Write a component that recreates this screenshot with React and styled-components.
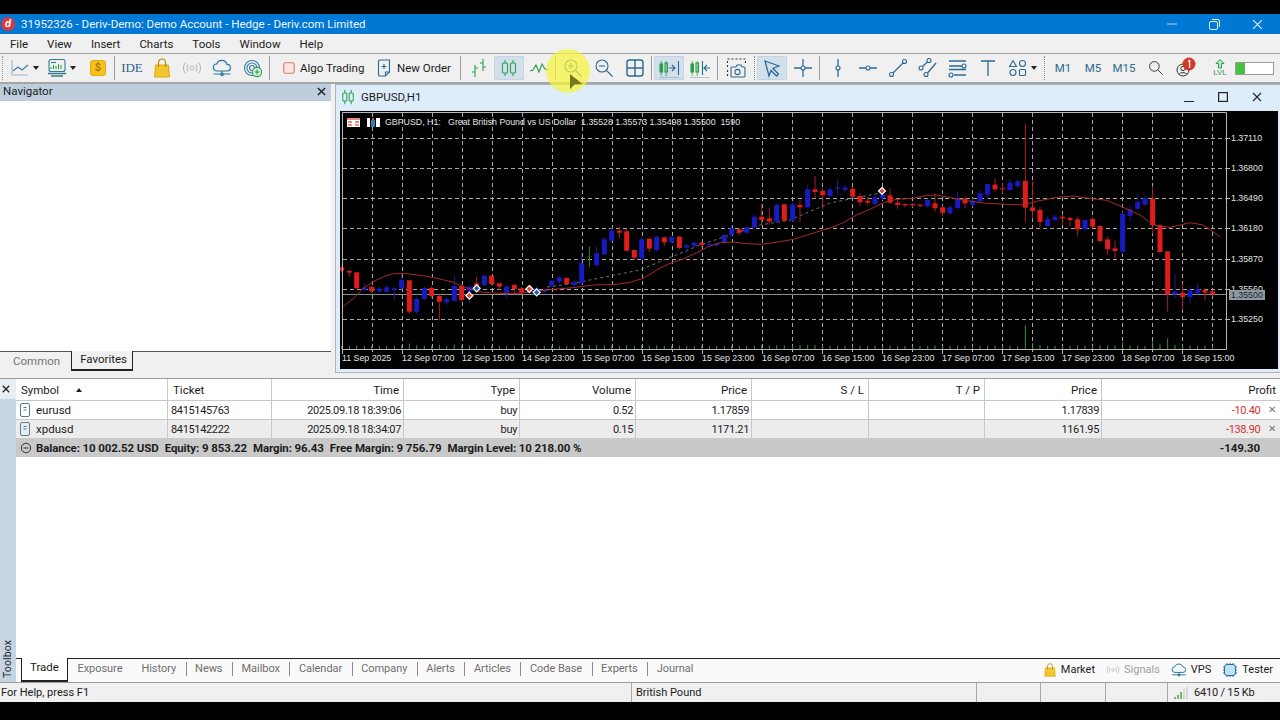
import React from "react";
import styled, { createGlobalStyle } from "styled-components";

const GlobalStyle = createGlobalStyle`
  html, body {
    margin: 0;
    padding: 0;
    background: #000;
  }
  * { box-sizing: border-box; }
`;

const Page = styled.div`
  width: 1280px;
  height: 720px;
  overflow: hidden;
  position: relative;
  display: flex;
  flex-direction: column;
  background: #000;
  padding: 14px 0 18px;
  font-family: Roboto, "Noto Sans", sans-serif;
  font-size: 11.5px;
  color: #1c1c1c;
  white-space: nowrap;
`;

const TitleBar = styled.div`
  height: 20px;
  display: flex;
  align-items: center;
  background: #0078d4;
  color: #eef6fc;
  padding: 0 1px;
`;

const TitleText = styled.span`
  margin-left: 6px;
  flex: 1;
`;

const AppLogo = styled.span`
  width: 14px;
  height: 14px;
  border-radius: 50%;
  background: #d9383f;
  color: #fff;
  font-weight: 700;
  font-style: italic;
  font-size: 11px;
  line-height: 14px;
  text-align: center;
`;

const WinButton = styled.span`
  width: 43px;
  display: flex;
  justify-content: center;
  align-items: center;
`;

const MenuBar = styled.div`
  height: 19px;
  display: flex;
  align-items: center;
  background: #f0f0f0;
  padding-left: 10px;
  gap: 19px;
`;

const Toolbar = styled.div`
  height: 31px;
  display: flex;
  align-items: center;
  background: #f0f0f0;
  border-top: 1px solid #a6a6a6;
  border-bottom: 2px solid #a6a6a6;
  padding-left: 2px;
`;

const Grip = styled.span`
  width: 1px;
  height: 24px;
  margin-right: 3px;
  border-left: 1px dotted #9a9a9a;
`;

const ToolBtn = styled.div`
  width: ${(p) => p.$w || 30}px;
  height: 24px;
  margin-left: ${(p) => p.$ml || 0}px;
  padding-left: ${(p) => p.$pl || 0}px;
  flex: none;
  display: flex;
  align-items: center;
  justify-content: ${(p) => (p.$pl ? "flex-start" : "center")};
  gap: ${(p) => p.$gap || 0}px;
  color: #2d6a92;
  background: ${(p) => (p.$active ? "#d2e0ec" : "transparent")};
  border: 1px solid ${(p) => (p.$active ? "#c4d4e2" : "transparent")};
`;

const ToolLabel = styled.span`
  color: #1c1c1c;
`;

const TimeLabel = styled.span`
  color: #2d6a92;
  font-size: 11.5px;
`;

const IdeLabel = styled.span`
  color: #2d5f88;
  font-family: "Liberation Serif", serif;
  font-size: 13px;
`;

const DollarBox = styled.span`
  width: 16px;
  height: 16px;
  border-radius: 3px;
  background: #f5c21b;
  border: 1px solid #e0aa10;
  color: #a9770a;
  font-weight: 700;
  font-size: 11px;
  line-height: 14px;
  text-align: center;
`;

const Caret = styled.span`
  width: 0;
  height: 0;
  border-left: 3.5px solid transparent;
  border-right: 3.5px solid transparent;
  border-top: 4px solid #222;
`;

const Sep = styled.span`
  width: 1px;
  height: 24px;
  flex: none;
  margin: 0 ${(p) => p.$mr || 2}px 0 ${(p) => p.$ml || 1}px;
  background: ${(p) => (p.$dotted ? "none" : "#9a9a9a")};
  border-left: ${(p) => (p.$dotted ? "1px dotted #8a8a8a" : "none")};
`;

const LevelBar = styled.span`
  width: 39px;
  height: 13px;
  flex: none;
  background: linear-gradient(90deg, #45c23e 0 25%, #fff 25%);
  border: 1px solid #9a9a9a;
`;

const LevelWrap = styled.span`
  display: flex;
  flex-direction: column;
  align-items: center;
  color: #2e9e4f;
`;

const LevelText = styled.span`
  font-size: 8px;
  line-height: 8px;
  font-family: "Liberation Sans", sans-serif;
`;

const Highlight = styled.div`
  position: absolute;
  left: 546px;
  top: 49px;
  width: 44px;
  height: 44px;
  border-radius: 50%;
  background: rgba(246, 244, 60, 0.72);
`;

const Pointer = styled.svg`
  position: absolute;
  left: 569px;
  top: 73px;
`;

const Workspace = styled.div`
  height: 294px;
  display: flex;
  background: #f0f0f0;
`;

const LeftPanel = styled.div`
  width: 331px;
  flex: none;
  display: flex;
  flex-direction: column;
`;

const PanelHead = styled.div`
  height: 17px;
  display: flex;
  align-items: center;
  justify-content: space-between;
  background: #bfcedc;
  padding: 0 5px 3px 3px;
`;

const PanelBody = styled.div`
  flex: none;
  height: 250px;
  background: #fff;
`;

const PanelTabs = styled.div`
  height: 20px;
  display: flex;
  align-items: stretch;
  border-top: 1px solid #555;
`;

const PanelTab = styled.div`
  display: flex;
  align-items: center;
  padding: 0 ${(p) => (p.$active ? 5 : 11)}px 2px ${(p) => (p.$active ? 8 : 13)}px;
  color: ${(p) => (p.$active ? "#1c1c1c" : "#777")};
  margin-top: ${(p) => (p.$active ? -1 : 0)}px;
  background: #f0f0f0;
  border: ${(p) => (p.$active ? "1px solid #222" : "none")};
  border-top: none;
  border-bottom-width: ${(p) => (p.$active ? 2 : 0)}px;
`;

const ChartWindow = styled.div`
  margin-left: 4px;
  flex: 1;
  height: 289px;
  display: flex;
  flex-direction: column;
  background: #deedfa;
  border: 1px solid #a9b4bd;
  border-right: none;
  padding: 0 2px 2px 4px;
`;

const ChartTitle = styled.div`
  height: 26px;
  flex: none;
  display: flex;
  align-items: center;
  padding-bottom: 3px;
`;

const ChartName = styled.span`
  flex: 1;
  margin-left: 5px;
`;

const ChartBtn = styled.span`
  width: 34px;
  display: flex;
  justify-content: center;
  margin-right: ${(p) => p.$mr || 0}px;
`;

const ChartCanvas = styled.svg`
  display: block;
  background: #000;
  flex: none;
`;

const Toolbox = styled.div`
  height: 305px;
  display: flex;
  background: #fff;
  border-top: 1px solid #9a9a9a;
  border-bottom: 1px solid #9a9a9a;
`;

const Strip = styled.div`
  width: 16px;
  flex: none;
  display: flex;
  flex-direction: column;
  justify-content: space-between;
  align-items: center;
  background: #c5d5e3;
`;

const StripClose = styled.div`
  height: 20px;
  width: 100%;
  display: flex;
  align-items: center;
  justify-content: center;
  padding-right: 4px;
  background: #e9eef3;
`;

const StripLabel = styled.span`
  writing-mode: vertical-rl;
  transform: rotate(180deg);
  font-size: 10.5px;
  letter-spacing: 0.1px;
  padding-top: 4px;
  padding-left: 2px;
`;

const ToolboxMain = styled.div`
  flex: 1;
  display: flex;
  flex-direction: column;
  min-width: 0;
`;

const Table = styled.div`
  flex: 1;
`;

const columns = "152px 104px 132px 116px 116px 116px 117px 116px 117px 1fr";

const HeadRow = styled.div`
  height: 21px;
  display: grid;
  grid-template-columns: ${columns};
  align-items: stretch;
`;

const HeadCell = styled.div`
  display: flex;
  align-items: center;
  justify-content: ${(p) => (p.$right ? "flex-end" : "flex-start")};
  padding: 0 4px 0 5px;
  border-right: 1px solid #c8c8c8;
  &:last-child { border-right: none; }
`;

const SortMark = styled.span`
  margin-left: 17px;
  width: 0;
  height: 0;
  border-left: 3.5px solid transparent;
  border-right: 3.5px solid transparent;
  border-bottom: 4px solid #222;
`;

const Row = styled.div`
  height: 19px;
  display: grid;
  grid-template-columns: ${columns};
  background: ${(p) => (p.$alt ? "#ececec" : "#fff")};
  border-top: 1px solid #c8c8c8;
`;

const Cell = styled.div`
  display: flex;
  align-items: center;
  gap: ${(p) => (p.$icon ? 6 : 8)}px;
  justify-content: ${(p) => (p.$right ? "flex-end" : "flex-start")};
  padding: 0 ${(p) => (p.$loss ? 4 : 2)}px 0 ${(p) => (p.$icon ? 4 : 3)}px;
  font-size: ${(p) => (p.$icon ? 11.5 : 11)}px;
  letter-spacing: ${(p) => (p.$icon ? 0 : -0.35)}px;
  color: ${(p) => (p.$loss ? "#d2342c" : "inherit")};
  border-right: 1px solid #c8c8c8;
  &:last-child { border-right: none; }
`;

const CloseMark = styled.span`
  color: #777;
  font-size: 10px;
  line-height: 1;
`;

const SummaryRow = styled.div`
  height: 19px;
  display: flex;
  align-items: center;
  background: #c9c9c9;
  padding: 0 20px 0 4px;
  font-weight: 700;
  letter-spacing: -0.1px;
  gap: 4px;
`;

const SummaryItems = styled.div`
  flex: 1;
  display: flex;
  gap: 6px;
`;

const TabBar = styled.div`
  height: 24px;
  flex: none;
  display: flex;
  align-items: stretch;
  border-top: 1px solid #222;
  background: #fafafa;
  padding-left: 5px;
`;

const Tab = styled.div`
  display: flex;
  align-items: center;
  padding: 0 ${(p) => (p.$active ? "8px" : "9.5px")} 5px;
  font-size: ${(p) => (p.$active ? 11.5 : 11)}px;
  letter-spacing: ${(p) => (p.$active ? 0 : -0.05)}px;
  color: ${(p) => (p.$active ? "#1c1c1c" : "#6e6e6e")};
  background: ${(p) => (p.$active ? "#fff" : "transparent")};
  margin-top: ${(p) => (p.$active ? "-1px" : "0")};
  border: ${(p) => (p.$active ? "1px solid #222" : "none")};
  border-top: ${(p) => (p.$active ? "none" : "0")};
  border-bottom-width: ${(p) => (p.$active ? "2px" : "0")};
  position: relative;
  & + & + &::before {
    content: "";
    position: absolute;
    left: 0;
    top: 3px;
    height: 14px;
    width: 1px;
    background: #8a8a8a;
  }
`;

const TabSpacer = styled.div`
  flex: 1;
`;

const SideTab = styled.div`
  display: flex;
  align-items: center;
  gap: 4px;
  padding-bottom: 2px;
  font-size: 11px;
  margin-right: ${(p) => p.$mr || 11}px;
  color: ${(p) => (p.$off ? "#a0a0a0" : "#1c1c1c")};
`;

const StatusBar = styled.div`
  height: 19px;
  display: flex;
  align-items: stretch;
  background: #f0f0f0;
  font-size: 11px;
`;

const StatusCell = styled.div`
  width: ${(p) => (p.$w ? `${p.$w}px` : "auto")};
  flex: ${(p) => (p.$w ? "none" : 1)};
  display: flex;
  align-items: center;
  gap: 6px;
  padding-left: ${(p) => p.$pl || 0}px;
  letter-spacing: ${(p) => (p.$end ? -0.2 : 0)}px;
  border-right: ${(p) => (p.$end ? "none" : "1px solid #a8a8a8")};
`;

const Svg = ({ w = 20, h = 20, children, ...rest }) => (
  <svg width={w} height={h} viewBox={`0 0 ${w} ${h}`} fill="none" stroke="currentColor" strokeWidth="1.1" {...rest}>
    {children}
  </svg>
);

const GREEN = "#2e9e4f";

const LineChartIcon = () => (
  <Svg>
    <path d="M2 2v15h16" stroke="#9fb4c4" />
    <path d="M3 13l5-4 4 3 6-5" stroke="#3b7aa5" />
  </Svg>
);

const PackIcon = () => (
  <Svg>
    <rect x="2" y="1.500" width="16" height="12" rx="2" stroke="#2f7d8c" />
    <path d="M4 11V9m2.500 2V7m2.500 4V8m2.500 3V6m2.500 5V7" stroke={GREEN} />
    <path d="M4 4.500h5" stroke="#2f7d8c" />
    <path d="M1 15.500h18M4 18h12" stroke="#2f7d8c" strokeWidth="1.400" />
  </Svg>
);

const BagIcon = ({ size = 20 }) => (
  <svg width={size} height={size} viewBox="0 0 20 20">
    <path d="M3.500 7h13l1 12h-15z" fill="#f3c62d" stroke="#dba915" />
    <path d="M6.500 9V4.500a3.500 3.500 0 017 0V9" fill="none" stroke="#b98a10" strokeWidth="1.200" />
  </svg>
);

const SignalIcon = ({ w = 20 }) => (
  <svg width={w} height={w * 0.7} viewBox="0 0 20 14" fill="none" stroke="#b5b5b5" strokeWidth="1">
    <circle cx="10" cy="7" r="2" />
    <path d="M6 3.500a6 6 0 000 7M14 3.500a6 6 0 010 7M3.500 1.500a9 9 0 000 11M16.500 1.500a9 9 0 010 11" />
  </svg>
);

const CloudIcon = ({ size = 20 }) => (
  <svg width={size} height={size} viewBox="0 0 20 20" fill="none" stroke="#25739f" strokeWidth="1.200">
    <path d="M5 13a3.500 3.500 0 01-.3-7A5.400 5.400 0 0115 6.400 3.300 3.300 0 0115.200 13z" />
    <path d="M1.500 16h17M10 13v3" />
    <circle cx="10" cy="16.500" r="1.200" />
  </svg>
);

const RadarIcon = () => (
  <Svg stroke="#3b7aa5">
    <circle cx="9" cy="10" r="7.500" />
    <circle cx="9" cy="10" r="5" />
    <circle cx="9" cy="10" r="2.500" />
    <circle cx="14" cy="14" r="4.600" fill="#d8f2dc" stroke={GREEN} />
    <path d="M14 11.500v5M11.500 14h5" stroke={GREEN} />
  </Svg>
);

const AlgoIcon = () => (
  <svg width="12" height="12" viewBox="0 0 12 12">
    <rect x="0.750" y="0.750" width="10.500" height="10.500" rx="1.500" fill="#fbe6e2" stroke="#dd7f72" strokeWidth="1.200" />
  </svg>
);

const OrderIcon = () => (
  <svg width="14" height="18" viewBox="0 0 14 18" fill="none" stroke="#2d6a92" strokeWidth="1.100">
    <path d="M2.500 1h10v12l-4 4h-6a1 1 0 01-1-1V2a1 1 0 011-1z" />
    <path d="M8.500 17v-4h4M7 5v5M4.500 7.500h5" />
  </svg>
);

const BarsIcon = () => (
  <Svg stroke={GREEN}>
    <path d="M6 7v12M3 14h3M6 10h3M14 1v12M11 5h3M14 9h3" />
  </Svg>
);

const CandlesIcon = () => (
  <Svg stroke={GREEN}>
    <path d="M6 2v3M6 15v3M14 2v3M14 15v3" />
    <rect x="3.500" y="5" width="5" height="10" rx="1" />
    <rect x="11.500" y="5" width="5" height="10" rx="1" />
  </Svg>
);

const ZigzagIcon = () => (
  <Svg stroke={GREEN}>
    <path d="M1 13l3-1 3-5 3 7 3-8 3 5 3 1" />
  </Svg>
);

const MagnifierIcon = ({ plus, color = "#2d6a92", size = 20 }) => (
  <svg width={size} height={size} viewBox="0 0 20 20" fill="none" stroke={color} strokeWidth="1.100">
    <circle cx="8" cy="8" r="6" />
    <path d="M12.500 12.500l6 6" />
    {color !== "#222" && <path d="M5 8h6" />}
    {plus && <path d="M8 5v6" />}
  </svg>
);

const GridIcon = () => (
  <Svg strokeWidth="1.400">
    <rect x="2" y="2" width="16" height="16" rx="2.500" />
    <path d="M10 2v16M2 10h16" />
  </Svg>
);

const ScrollIcon = ({ back }) => (
  <Svg w={22}>
    <rect x="2" y="6" width="2.500" height="8" fill={GREEN} stroke={GREEN} />
    <rect x="7" y="5" width="2.500" height="9" fill="none" stroke={GREEN} />
    <path d="M3.200 3v15M8.200 3v15" stroke={GREEN} strokeWidth="0.800" />
    {back ? (
      <path d="M13.500 3v14M21 10h-6M18 7l-3 3 3 3" />
    ) : (
      <path d="M11 10h6M14 7l3 3-3 3M20.500 3v14" />
    )}
    <path d="M1 20h20" stroke="#7d9fb5" />
  </Svg>
);

const CameraIcon = () => (
  <Svg w={22} h={22}>
    <path d="M1.500 10V2h18v6M1.500 13v7" strokeDasharray="2 2" stroke="#333" />
    <path d="M6 10h4l1-2h4l1 2h2a1 1 0 011 1v8a1 1 0 01-1 1H6a1 1 0 01-1-1v-8a1 1 0 011-1z" />
    <circle cx="11.500" cy="15" r="2.600" />
  </Svg>
);

const CursorIcon = () => (
  <Svg strokeWidth="1.300">
    <path d="M3 3l14 5-6 2.500 5.500 5.500-2 2-5.500-5.500L7 18z" />
  </Svg>
);

const CrossIcon = () => (
  <Svg>
    <circle cx="10" cy="10" r="2" />
    <path d="M10 1v7M10 12v7M1 10h7M12 10h7" strokeWidth="1.300" />
  </Svg>
);

const VLineIcon = () => (
  <Svg>
    <circle cx="10" cy="10" r="2" />
    <path d="M10 1v7M10 12v7" strokeWidth="1.300" />
  </Svg>
);

const HLineIcon = () => (
  <Svg>
    <circle cx="10" cy="10" r="2" />
    <path d="M1 10h7M12 10h7" strokeWidth="1.300" />
  </Svg>
);

const TrendIcon = () => (
  <Svg>
    <circle cx="3.500" cy="16.500" r="2" />
    <circle cx="16.500" cy="3.500" r="2" />
    <path d="M5 15L15 5" strokeWidth="1.300" />
  </Svg>
);

const ChannelIcon = () => (
  <Svg>
    <circle cx="3" cy="10" r="2" />
    <circle cx="11" cy="2.500" r="2" />
    <circle cx="8" cy="16.500" r="2" />
    <path d="M4.500 8.500L9.500 4M9.500 15L18 5" strokeWidth="1.300" />
  </Svg>
);

const FiboIcon = () => (
  <Svg>
    <path d="M1 3h17M1 8h13M1 11.500h17M6 17h12" strokeWidth="1.300" />
    <circle cx="16" cy="8" r="2" />
    <circle cx="3" cy="17" r="2" />
  </Svg>
);

const TextToolIcon = () => (
  <Svg strokeWidth="1.300">
    <path d="M3 3h14M10 3v15" />
  </Svg>
);

const ShapesIcon = () => (
  <Svg>
    <path d="M5 2.500l3.500 6h-7z" />
    <circle cx="14.500" cy="5.500" r="3" />
    <circle cx="5" cy="14.500" r="3" />
    <rect x="11.500" y="11.500" width="6" height="6" rx="1" />
  </Svg>
);

const UserBadgeIcon = () => (
  <svg width="24" height="22" viewBox="0 0 24 22" fill="none">
    <circle cx="9" cy="13" r="6" stroke="#333" />
    <circle cx="9" cy="11.500" r="2.200" stroke="#333" />
    <path d="M5 17.500c1-2.500 7-2.500 8 0" stroke="#333" />
    <circle cx="15" cy="7" r="6.500" fill="#d33a2c" />
    <path d="M14 4.500l1.600-1v7.500" stroke="#fff" strokeWidth="1.200" />
  </svg>
);

const LevelIcon = () => (
  <LevelWrap>
    <svg width="10" height="10" viewBox="0 0 10 10" fill="#bfe9c6" stroke="#2e9e4f">
      <path d="M5 0.500l4 4H6.500V9h-3V4.500H1z" />
    </svg>
    <LevelText>LVL</LevelText>
  </LevelWrap>
);

const ChipIcon = () => (
  <svg width="16" height="16" viewBox="0 0 16 16" fill="none" stroke="#25739f">
    <rect x="2.500" y="2.500" width="11" height="11" rx="2.500" fill="#bfe2f7" />
    <path d="M5 1v1.500M8 1v1.500M11 1v1.500M5 13.500V15M8 13.500V15M11 13.500V15M1 5h1.500M1 8h1.500M1 11h1.500M13.500 5H15M13.500 8H15M13.500 11H15" />
  </svg>
);

const DocIcon = () => (
  <svg width="10" height="14" viewBox="0 0 10 14" fill="none" stroke="#4c7f9f">
    <rect x="0.500" y="0.500" width="9" height="13" rx="1.500" />
    <path d="M3.500 4.500h3M3.500 7h3" />
  </svg>
);

const MinusCircle = () => (
  <svg width="12" height="12" viewBox="0 0 12 12" fill="none" stroke="#333">
    <circle cx="6" cy="6" r="4.700" />
    <path d="M3.500 6h5" />
  </svg>
);

const XMark = ({ size = 9, color = "#222", width = 1.6 }) => (
  <svg width={size} height={size} viewBox="0 0 10 10" fill="none" stroke={color} strokeWidth={width}>
    <path d="M1 1l8 8M9 1l-8 8" />
  </svg>
);

const SignalBars = () => (
  <svg width="14" height="12" viewBox="0 0 14 12">
    <path d="M1 10v2M4 8v4M7 5v7" stroke="#3f9f3f" strokeWidth="1.400" />
    <path d="M10 2v10M13 0v12" stroke="#c0c0c0" strokeWidth="1" />
  </svg>
);

// candles read off the picture: [zoom x, colour, wick top, body top, body bottom, wick bottom]
const leftCandles = [
  [5, "r", 470, 472, 482, 485], [28, "r", 478, 483, 488, 500], [50, "r", 487, 487, 535, 537], [73, "b", 518, 533, 540, 545],
  [95, "r", 528, 531, 543, 548], [118, "b", 530, 536, 544, 550], [140, "b", 525, 532, 545, 548], [163, "b", 530, 535, 540, 570],
  [185, "b", 490, 510, 535, 540], [208, "r", 510, 511, 605, 612], [230, "b", 560, 567, 605, 612], [253, "b", 530, 534, 567, 570],
  [275, "r", 528, 534, 558, 565], [298, "r", 555, 558, 575, 630], [320, "b", 560, 567, 577, 585], [343, "b", 495, 528, 572, 575],
  [365, "r", 525, 528, 570, 575], [388, "b", 525, 530, 545, 580], [410, "r", 500, 520, 530, 545], [433, "b", 495, 497, 525, 530],
  [455, "r", 495, 497, 522, 525], [478, "r", 518, 520, 530, 540], [500, "b", 525, 530, 550, 565], [523, "r", 522, 525, 537, 550],
  [545, "r", 530, 535, 548, 552], [568, "r", 525, 530, 545, 550], [590, "b", 530, 535, 550, 555], [613, "b", 535, 540, 545, 550],
  [635, "b", 510, 512, 527, 530], [658, "b", 497, 502, 515, 520], [680, "r", 502, 504, 522, 525], [703, "b", 510, 516, 525, 530],
  [725, "b", 430, 460, 520, 525], [748, "g", 410, 440, 441, 472], [770, "b", 410, 430, 465, 470], [793, "b", 380, 388, 433, 436],
  [815, "b", 352, 362, 392, 395], [838, "r", 350, 362, 368, 385], [860, "r", 358, 364, 422, 425], [883, "r", 418, 420, 443, 450],
  [905, "b", 385, 388, 445, 450], [928, "r", 382, 387, 416, 425], [950, "b", 378, 380, 420, 425], [973, "r", 380, 382, 397, 408],
  [995, "b", 378, 381, 397, 402], [1018, "r", 378, 380, 414, 418], [1040, "b", 400, 406, 413, 430], [1063, "b", 395, 398, 408, 412],
  [1085, "r", 395, 398, 405, 412], [1108, "b", 398, 402, 406, 410], [1130, "b", 398, 400, 406, 410], [1153, "b", 372, 375, 397, 402],
  [1175, "b", 345, 355, 375, 380], [1198, "r", 355, 358, 368, 375], [1220, "b", 350, 352, 368, 372], [1243, "b", 315, 320, 352, 356],
  [1265, "r", 282, 320, 330, 345], [1288, "r", 295, 325, 335, 345], [1310, "b", 280, 285, 335, 340], [1333, "r", 282, 283, 332, 335],
];

const rightCandles = [
  [38, "b", 275, 283, 332, 335], [60, "r", 270, 285, 292, 335], [83, "b", 225, 238, 292, 295], [105, "r", 198, 238, 246, 265],
  [128, "r", 235, 243, 256, 298], [150, "b", 232, 238, 258, 262], [173, "b", 208, 232, 236, 255], [195, "b", 225, 232, 240, 245],
  [218, "r", 232, 236, 260, 263], [240, "r", 250, 258, 277, 288], [263, "r", 260, 272, 278, 286], [285, "b", 255, 262, 282, 285],
  [308, "b", 250, 255, 265, 270], [330, "r", 235, 256, 278, 282], [353, "r", 268, 278, 285, 296], [375, "r", 280, 282, 286, 292],
  [398, "r", 280, 282, 286, 292], [420, "r", 283, 284, 288, 292], [443, "b", 265, 270, 288, 292], [465, "r", 253, 280, 295, 305],
  [488, "r", 285, 292, 308, 320], [510, "b", 285, 292, 310, 314], [533, "b", 245, 265, 294, 298], [555, "r", 260, 266, 280, 296],
  [578, "b", 265, 272, 285, 290], [600, "b", 240, 250, 274, 278], [623, "b", 220, 222, 254, 268], [645, "r", 205, 224, 238, 245],
  [668, "r", 220, 235, 238, 250], [690, "b", 208, 218, 240, 242], [713, "b", 208, 214, 228, 234], [736, "r", 40, 213, 293, 338],
  [758, "r", 212, 292, 303, 325], [780, "r", 290, 300, 336, 352], [803, "b", 320, 327, 348, 350], [825, "b", 315, 320, 330, 335],
  [848, "r", 313, 320, 325, 345], [870, "r", 320, 324, 330, 350], [893, "r", 320, 328, 358, 380], [915, "b", 328, 330, 358, 360],
  [938, "r", 322, 327, 350, 355], [960, "r", 345, 348, 393, 397], [983, "r", 380, 388, 418, 434], [1005, "r", 392, 415, 423, 445],
  [1028, "b", 305, 312, 425, 432], [1050, "b", 285, 298, 318, 335], [1073, "b", 250, 276, 296, 300], [1095, "b", 255, 264, 284, 288],
  [1118, "r", 228, 266, 346, 372], [1140, "r", 340, 346, 426, 430], [1163, "r", 423, 424, 553, 605], [1185, "b", 492, 545, 553, 565],
  [1208, "r", 520, 548, 561, 600], [1230, "b", 530, 541, 562, 580], [1253, "b", 520, 538, 550, 552], [1275, "r", 535, 540, 548, 572],
  [1298, "r", 540, 544, 553, 558],
];

const toY = (z) => 110 + z / 3;
const candles = [
  ...leftCandles.map(([x, ...r]) => [340 + x / 3, ...r]),
  ...rightCandles.map(([x, ...r]) => [780 + x / 3, ...r]),
];

const maLeft = [[10, 590], [40, 565], [70, 535], [100, 515], [130, 500], [160, 491], [200, 491], [250, 497], [300, 507], [340, 517], [370, 530], [400, 540], [430, 547], [480, 550], [540, 550], [600, 542], [650, 537], [700, 533], [760, 525], [830, 523], [870, 517], [910, 505], [950, 480], [985, 462], [1030, 447], [1070, 428], [1100, 412], [1140, 398], [1180, 396], [1220, 401], [1265, 403], [1320, 395]];
const maRight = [[40, 388], [90, 372], [150, 354], [190, 338], [230, 315], [270, 298], [310, 278], [350, 268], [400, 265], [440, 256], [470, 255], [510, 263], [560, 272], [620, 280], [680, 283], [730, 285], [770, 274], [830, 262], [880, 258], [920, 264], [980, 271], [1030, 292], [1080, 315], [1120, 345], [1170, 352], [1230, 338], [1270, 345], [1320, 380]];
const maPoints = [
  ...maLeft.map(([x, y]) => `${340 + x / 3},${toY(y)}`),
  ...maRight.map(([x, y]) => `${780 + x / 3},${toY(y)}`),
].join(" ");

const COLORS = { r: ["#e01c1c", "#a82020"], b: ["#1a1ac4", "#1c1c96"], g: ["#2f8a2f", "#2f8a2f"] };

const priceLevels = [
  [138, "1.37110"], [168, "1.36800"], [198, "1.36490"], [228, "1.36180"], [259, "1.35870"], [289, "1.35560"], [319, "1.35250"],
];
const timeLabels = ["11 Sep 2025", "12 Sep 07:00", "12 Sep 15:00", "14 Sep 23:00", "15 Sep 07:00", "15 Sep 15:00", "15 Sep 23:00", "16 Sep 07:00", "16 Sep 15:00", "16 Sep 23:00", "17 Sep 07:00", "17 Sep 15:00", "17 Sep 23:00", "18 Sep 07:00", "18 Sep 15:00"];
const gridX = Array.from({ length: 29 }, (_, i) => 372 + i * 30);
const markers = [
  [388, 557, "#d8483c"], [410, 535, "#2060c0"], [568, 537, "#d8483c"], [590, 547, "#2060c0"],
];

const Marker = ({ x, y, color }) => (
  <path d={`M${x} ${y - 3.5}l3.5 3.5-3.5 3.5-3.5-3.5z`} fill={color} stroke="#fff" strokeWidth="1.200" />
);

const ChartText = styled.text`
  font-family: "Liberation Sans", sans-serif;
  font-size: 8.8px;
  fill: ${(p) => p.$fill || "#e4e4e4"};
  white-space: pre;
`;

const Chart = () => (
  <ChartCanvas width="938" height="258" viewBox="340 111 938 258">
    {priceLevels.map(([y]) => (
      <path key={y} d={`M343 ${y + 0.5}H1226`} stroke="#a8a8a8" strokeDasharray="4 3" />
    ))}
    {gridX.map((x) => (
      <path key={x} d={`M${x + 0.5} 113V349`} stroke="#a8a8a8" strokeDasharray="4 3" />
    ))}
    <polyline points="547,287 570,284 640,270 700,245 760,225 790,220 830,203 855,198 880,193" fill="none" stroke="#7f93a5" strokeWidth="0.800" strokeDasharray="3 3" />
    <path d="M343 294.500H1226" stroke="#8a8a8a" strokeWidth="1.200" />
    {candles.map(([x, c, wt, bt, bb, wb]) => {
      const range = (wb - wt) / 3;
      const vol = Math.min(24, 3 + range * range * 0.0021);
      return (
        <g key={x}>
          <path d={`M${x} 349V${349 - vol}`} stroke="#3f8f45" />
          <path d={`M${x} ${toY(wt)}V${toY(wb)}`} stroke={COLORS[c][1]} />
          <rect x={x - 2.5} y={toY(bt)} width="5" height={(bb - bt) / 3} fill={COLORS[c][0]} />
        </g>
      );
    })}
    <polyline points={maPoints} fill="none" stroke="#a82a2a" strokeWidth="1" />
    {markers.map(([x, y, color]) => (
      <Marker key={x} x={340 + x / 3} y={toY(y)} color={color} />
    ))}
    <Marker x={882} y={191} color="#d8483c" />
    <path d="M342.500 112.500H1226.500V349.500H342.500z" fill="none" stroke="#b8b8b8" />
    {timeLabels.map((t, i) => (
      <g key={t}>
        <path d={`M${342.5 + i * 60} 349v5`} stroke="#b8b8b8" />
        {i < 14 && <path d={`M${372.5 + i * 60} 349v3`} stroke="#b8b8b8" />}
        <ChartText x={342 + i * 60} y="361">{t}</ChartText>
      </g>
    ))}
    {priceLevels.map(([y, label]) => (
      <g key={label}>
        <path d={`M1226 ${y + 0.5}h4`} stroke="#b8b8b8" />
        <ChartText x="1231" y={y + 3}>{label}</ChartText>
      </g>
    ))}
    <rect x="1229" y="290" width="36" height="10" fill="#8d9aa5" />
    <ChartText x="1231" y="298" $fill="#222">1.35500</ChartText>
    <g>
      <rect x="347" y="118" width="13" height="9" fill="#fff" />
      <path d="M347 119h13M348 122h4M355 122h4M348 125h4M355 125h4" stroke="#e06a5c" strokeWidth="1.400" />
      <path d="M367 118h3v9h-3zM376 118h4v9h-4z" fill="#fff" />
      <path d="M371 120h4v7h-4z" fill="#3a79b5" />
      <path d="M372 118h2v2h-2z" fill="#d8483c" />
    </g>
    <ChartText x="385" y="125">GBPUSD, H1:   Great British Pound vs US Dollar  1.35528 1.35573 1.35498 1.35500  1590</ChartText>
  </ChartCanvas>
);

const menuItems = ["File", "View", "Insert", "Charts", "Tools", "Window", "Help"];
const tabs = ["Exposure", "History", "News", "Mailbox", "Calendar", "Company", "Alerts", "Articles", "Code Base", "Experts", "Journal"];
const heads = [["Ticket"], ["Time", 1], ["Type", 1], ["Volume", 1], ["Price", 1], ["S / L", 1], ["T / P", 1], ["Price", 1], ["Profit", 1]];
const positions = [
  { symbol: "eurusd", ticket: "8415145763", time: "2025.09.18 18:39:06", volume: "0.52", open: "1.17859", now: "1.17839", profit: "-10.40" },
  { symbol: "xpdusd", ticket: "8415142222", time: "2025.09.18 18:34:07", volume: "0.15", open: "1171.21", now: "1161.95", profit: "-138.90", alt: true },
];

const App = () => (
  <Page>
    <GlobalStyle />
    <TitleBar>
      <AppLogo>d</AppLogo>
      <TitleText>31952326 - Deriv-Demo: Demo Account - Hedge - Deriv.com Limited</TitleText>
      <WinButton>
        <svg width="10" height="10" fill="none" stroke="#a9d3f0"><path d="M0 5h10" /></svg>
      </WinButton>
      <WinButton>
        <svg width="11" height="11" fill="none" stroke="#e5f2fb"><rect x="0.500" y="2.500" width="8" height="8" rx="1.500" /><path d="M3 .5h6a1.500 1.500 0 011.500 1.500v6" /></svg>
      </WinButton>
      <WinButton>
        <XMark size={11} color="#e5f2fb" width={1} />
      </WinButton>
    </TitleBar>
    <MenuBar>
      {menuItems.map((m) => <span key={m}>{m}</span>)}
    </MenuBar>
    <Toolbar>
      <Grip />
      <ToolBtn $w={36} $gap={3}><LineChartIcon /><Caret /></ToolBtn>
      <ToolBtn $w={38} $gap={3}><PackIcon /><Caret /></ToolBtn>
      <ToolBtn $ml={3}><DollarBox>$</DollarBox></ToolBtn>
      <Sep />
      <ToolBtn><IdeLabel>IDE</IdeLabel></ToolBtn>
      <ToolBtn><BagIcon /></ToolBtn>
      <ToolBtn><SignalIcon /></ToolBtn>
      <ToolBtn><CloudIcon /></ToolBtn>
      <ToolBtn $ml={1}><RadarIcon /></ToolBtn>
      <Sep />
      <ToolBtn $w={97} $pl={10} $gap={5}><AlgoIcon /><ToolLabel>Algo Trading</ToolLabel></ToolBtn>
      <ToolBtn $w={86} $ml={2} $pl={5} $gap={6}><OrderIcon /><ToolLabel>New Order</ToolLabel></ToolBtn>
      <Sep $ml={3} $mr={3} />
      <ToolBtn><BarsIcon /></ToolBtn>
      <ToolBtn $active><CandlesIcon /></ToolBtn>
      <ToolBtn><ZigzagIcon /></ToolBtn>
      <Sep />
      <ToolBtn><MagnifierIcon plus /></ToolBtn>
      <ToolBtn $ml={1}><MagnifierIcon /></ToolBtn>
      <ToolBtn $ml={1}><GridIcon /></ToolBtn>
      <Sep />
      <ToolBtn $active><ScrollIcon /></ToolBtn>
      <ToolBtn $ml={1}><ScrollIcon back /></ToolBtn>
      <Sep $ml={2} $mr={4} />
      <ToolBtn><CameraIcon /></ToolBtn>
      <Sep $dotted $ml={2} $mr={2} />
      <ToolBtn $active><CursorIcon /></ToolBtn>
      <ToolBtn $ml={1}><CrossIcon /></ToolBtn>
      <Sep $mr={3} />
      <ToolBtn><VLineIcon /></ToolBtn>
      <ToolBtn><HLineIcon /></ToolBtn>
      <ToolBtn><TrendIcon /></ToolBtn>
      <ToolBtn><ChannelIcon /></ToolBtn>
      <ToolBtn><FiboIcon /></ToolBtn>
      <ToolBtn><TextToolIcon /></ToolBtn>
      <ToolBtn $w={38} $gap={3}><ShapesIcon /><Caret /></ToolBtn>
      <Sep $dotted $ml={3} $mr={3} />
      <ToolBtn><TimeLabel>M1</TimeLabel></ToolBtn>
      <ToolBtn><TimeLabel>M5</TimeLabel></ToolBtn>
      <ToolBtn $ml={1}><TimeLabel>M15</TimeLabel></ToolBtn>
      <ToolBtn $ml={2}><MagnifierIcon color="#222" size={16} /></ToolBtn>
      <ToolBtn><UserBadgeIcon /></ToolBtn>
      <ToolBtn $ml={4}><LevelIcon /></ToolBtn>
      <LevelBar />
    </Toolbar>
    <Workspace>
      <LeftPanel>
        <PanelHead>
          <span>Navigator</span>
          <XMark />
        </PanelHead>
        <PanelBody />
        <PanelTabs>
          <PanelTab>Common</PanelTab>
          <PanelTab $active>Favorites</PanelTab>
        </PanelTabs>
      </LeftPanel>
      <ChartWindow>
        <ChartTitle>
          <svg width="16" height="16" viewBox="0 0 20 20" fill="none" stroke={GREEN} strokeWidth="1.300">
            <path d="M6 1v4M6 15v4M14 1v4M14 15v4" />
            <rect x="3.500" y="5" width="5" height="10" rx="1" />
            <rect x="11.500" y="5" width="5" height="10" rx="1" />
          </svg>
          <ChartName>GBPUSD,H1</ChartName>
          <ChartBtn>
            <svg width="10" height="10" fill="none" stroke="#222"><path d="M0 9.500h10" /></svg>
          </ChartBtn>
          <ChartBtn>
            <svg width="10" height="10" fill="none" stroke="#222" strokeWidth="1.200"><rect x="0.600" y="0.600" width="8.800" height="8.800" /></svg>
          </ChartBtn>
          <ChartBtn $mr={4}>
            <XMark size={10} width={1.1} />
          </ChartBtn>
        </ChartTitle>
        <Chart />
      </ChartWindow>
    </Workspace>
    <Toolbox>
      <Strip>
        <StripClose><XMark size={8} /></StripClose>
        <StripLabel>Toolbox</StripLabel>
      </Strip>
      <ToolboxMain>
        <Table>
          <HeadRow>
            <HeadCell>Symbol<SortMark /></HeadCell>
            {heads.map(([label, right], i) => (
              <HeadCell key={i} $right={right}>{label}</HeadCell>
            ))}
          </HeadRow>
          {positions.map((p) => (
            <Row key={p.ticket} $alt={p.alt}>
              <Cell $icon><DocIcon />{p.symbol}</Cell>
              <Cell>{p.ticket}</Cell>
              <Cell $right>{p.time}</Cell>
              <Cell $right>buy</Cell>
              <Cell $right>{p.volume}</Cell>
              <Cell $right>{p.open}</Cell>
              <Cell />
              <Cell />
              <Cell $right>{p.now}</Cell>
              <Cell $right $loss>{p.profit}<CloseMark>✕</CloseMark></Cell>
            </Row>
          ))}
          <SummaryRow>
            <MinusCircle />
            <SummaryItems>
              <span>Balance: 10 002.52 USD</span>
              <span>Equity: 9 853.22</span>
              <span>Margin: 96.43</span>
              <span>Free Margin: 9 756.79</span>
              <span>Margin Level: 10 218.00 %</span>
            </SummaryItems>
            <span>-149.30</span>
          </SummaryRow>
        </Table>
        <TabBar>
          <Tab $active>Trade</Tab>
          {tabs.map((t) => <Tab key={t}>{t}</Tab>)}
          <TabSpacer />
          <SideTab><BagIcon size={14} />Market</SideTab>
          <SideTab $off><SignalIcon w={14} />Signals</SideTab>
          <SideTab><CloudIcon size={16} />VPS</SideTab>
          <SideTab $mr={7}><ChipIcon />Tester</SideTab>
        </TabBar>
      </ToolboxMain>
    </Toolbox>
    <StatusBar>
      <StatusCell $w={632} $pl={1}>For Help, press F1</StatusCell>
      <StatusCell $w={345} $pl={4}>British Pound</StatusCell>
      <StatusCell $w={64} />
      <StatusCell $w={65} />
      <StatusCell $w={62} />
      <StatusCell $end $pl={6}><SignalBars />6410 / 15 Kb</StatusCell>
    </StatusBar>
    <Highlight />
    <Pointer width="16" height="18" viewBox="0 0 16 18">
      <path d="M1 1v15l4.500-4.500 8-.5z" fill="#77781c" />
    </Pointer>
  </Page>
);

export default App;
